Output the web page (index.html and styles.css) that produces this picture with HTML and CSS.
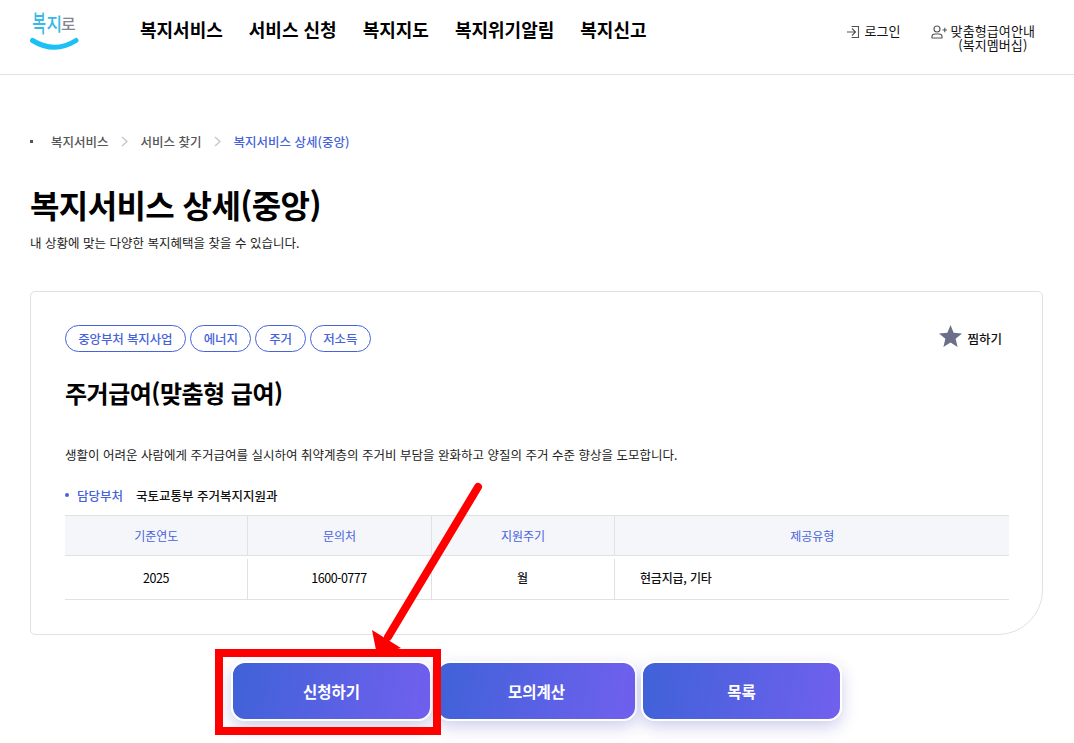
FILE: index.html
```html
<!DOCTYPE html>
<html lang="ko">
<head>
<meta charset="utf-8">
<title>복지서비스 상세(중앙)</title>
<link rel="stylesheet" href="styles.css">
</head>
<body>
<header class="header">
  <a class="logo"><span class="logo-text"><span class="logo-a">복</span><span class="logo-b">지</span><span class="logo-c">로</span></span>
    <svg class="logo-smile" width="50" height="14" viewBox="0 0 50 14"><path d="M2.500 3.500Q24.500 17 46 3.500" fill="none" stroke="#1cc0f5" stroke-width="5" stroke-linecap="round"/></svg>
  </a>
  <nav class="gnb">
    <a>복지서비스</a><a>서비스 신청</a><a>복지지도</a><a>복지위기알림</a><a>복지신고</a>
  </nav>
  <div class="util">
    <a class="util-item">
      <svg width="14" height="14" viewBox="0 0 14 14"><path d="M1 7H9M6 3.500L9.500 7L6 10.500M5.500 1.500H12.500V12.500H5.500" fill="none" stroke="#555" stroke-width="1.100"/></svg>
      <span>로그인</span>
    </a>
    <a class="util-item member">
      <svg width="16" height="14" viewBox="0 0 16 14"><circle cx="6" cy="4" r="3" fill="none" stroke="#555" stroke-width="1.100"/><path d="M1 13V11.500Q1 9 4 9H8Q11 9 11 11.500V13ZM11.500 5H16M13.750 2.750V7.250" fill="none" stroke="#555" stroke-width="1.100"/></svg>
      <span>맞춤형급여안내<br>(복지멤버십)</span>
    </a>
  </div>
</header>
<main class="main">
  <ol class="crumbs">
    <li class="crumb-dot"></li>
    <li>복지서비스</li>
    <li class="sep"><svg width="7" height="11" viewBox="0 0 7 11"><path d="M1 1L6 5.500L1 10" fill="none" stroke="#c8c8c8" stroke-width="1.500"/></svg></li>
    <li>서비스 찾기</li>
    <li class="sep"><svg width="7" height="11" viewBox="0 0 7 11"><path d="M1 1L6 5.500L1 10" fill="none" stroke="#c8c8c8" stroke-width="1.500"/></svg></li>
    <li class="crumb-now">복지서비스 상세(중앙)</li>
  </ol>
  <h1 class="title">복지서비스 상세(중앙)</h1>
  <p class="subtitle">내 상황에 맞는 다양한 복지혜택을 찾을 수 있습니다.</p>
  <section class="card">
    <div class="card-top">
      <ul class="tags">
        <li>중앙부처 복지사업</li><li>에너지</li><li>주거</li><li>저소득</li>
      </ul>
      <button class="fav">
        <svg width="23" height="22" viewBox="0 0 22 21"><path d="M11 0L14 7.500L22 8.100L15.900 13.200L17.800 21L11 16.800L4.200 21L6.100 13.200L0 8.100L8 7.500Z" fill="#6b6f8a"/></svg>
        <span>찜하기</span>
      </button>
    </div>
    <h2 class="card-title">주거급여(맞춤형 급여)</h2>
    <p class="desc">생활이 어려운 사람에게 주거급여를 실시하여 취약계층의 주거비 부담을 완화하고 양질의 주거 수준 향상을 도모합니다.</p>
    <div class="dept"><span class="dept-label">담당부처</span><span class="dept-value">국토교통부 주거복지지원과</span></div>
    <table class="info">
      <thead><tr><th>기준연도</th><th>문의처</th><th>지원주기</th><th>제공유형</th></tr></thead>
      <tbody><tr><td class="num">2025</td><td class="num">1600-0777</td><td>월</td><td class="left">현금지급, 기타</td></tr></tbody>
    </table>
  </section>
  <div class="actions">
    <a class="btn">신청하기</a><a class="btn">모의계산</a><a class="btn">목록</a>
  </div>
</main>
<svg class="annotation" width="1074" height="743" viewBox="0 0 1074 743">
  <path d="M478 487L388 637" fill="none" stroke="#ff0000" stroke-width="8" stroke-linecap="round"/>
  <path d="M372 630L377 655L401 648Z" fill="#ff0000"/>
  <rect x="219" y="653" width="218" height="78" fill="none" stroke="#ff0000" stroke-width="8"/>
</svg>
</body>
</html>
```
FILE: styles.css
```css
* { box-sizing: border-box; }
html, body { margin: 0; padding: 0; height: 743px; overflow: hidden; }
body { position: relative; background: #fff; color: #111; font-family: "Noto Sans CJK KR", "Noto Sans", sans-serif; }
ul, ol { list-style: none; margin: 0; padding: 0; }
.header { display: flex; align-items: flex-start; height: 75px; padding: 0 39px 0 30px; border-bottom: 1px solid #e1e1e1; }
.logo { display: flex; flex-direction: column; width: 50px; margin-top: 5px; }
.logo-text { display: flex; align-items: flex-end; height: 32px; padding-left: 2px; font-weight: 500; white-space: nowrap; }
.logo-a { font-size: 20px; line-height: 30px; color: #35b9ea; transform: scale(0.750, 1.200); margin: 0 -2px 0 -2px; }
.logo-b { font-size: 17px; line-height: 28px; color: #35b9ea; transform: scaleY(1.100); margin-right: -1px; }
.logo-c { font-size: 16px; line-height: 27px; color: #85858d; }
.logo-smile { margin-top: 0; }
.gnb { display: flex; gap: 26px; margin: 17px 0 0 60px; font-size: 18px; line-height: 25px; font-weight: 700; color: #000; white-space: nowrap; }
.util { display: flex; gap: 30px; margin: 24px 0 0 auto; font-size: 13px; line-height: 14px; color: #111; letter-spacing: 0.100px; }
.util-item { display: flex; gap: 4px; align-items: flex-start; white-space: nowrap; }
.util-item svg { margin-top: 1px; }
.member span { text-align: center; }
.main { padding: 0 31px 0 30px; }
.crumbs { display: flex; align-items: center; margin-top: 56px; height: 20px; font-size: 12.500px; font-weight: 500; color: #555; }
.crumb-dot { width: 3px; height: 3px; margin-right: 18px; background: #555; }
.sep { display: flex; margin: 0 13px 0 12px; }
.crumb-now { color: #4663dc; }
.title { margin: 30px 0 0; font-size: 32px; line-height: 46px; font-weight: 700; color: #000; letter-spacing: -0.600px; }
.subtitle { margin: 6px 0 0; font-size: 12.500px; line-height: 20px; color: #222; }
.card { height: 344px; margin-top: 38px; padding: 33px 33px 0 34px; border: 1px solid #e1e1e1; border-radius: 5px 5px 45px 5px; }
.card-top { display: flex; justify-content: space-between; align-items: flex-start; }
.tags { display: flex; gap: 4px; margin-left: -0.500px; }
.tags li { height: 27px; padding: 0 12.700px; border: 1px solid #4663dc; border-radius: 14px; font-size: 12.500px; line-height: 25px; font-weight: 500; color: #4663dc; letter-spacing: -0.150px; }
.fav { display: flex; align-items: center; gap: 5px; height: 27px; margin: 0 7px 0 0; padding: 0; border: 0; background: none; font: 500 12.500px "Noto Sans CJK KR", sans-serif; color: #111; }
.fav svg { margin-top: -5px; }
.card-title { margin: 23px 0 0; font-size: 24px; line-height: 35px; font-weight: 700; color: #000; letter-spacing: -0.500px; }
.desc { margin: 35px 0 0; font-size: 12.500px; line-height: 20px; color: #222; white-space: nowrap; }
.dept { display: flex; align-items: center; margin-top: 20px; height: 20px; font-size: 12.500px; font-weight: 500; }
.dept-label { position: relative; width: 71px; padding-left: 12px; color: #4663dc; }
.dept-label::before { content: ""; position: absolute; left: 0; top: 7px; width: 4px; height: 4px; border-radius: 50%; background: #4663dc; }
.dept-value { color: #111; }
.info { width: 944px; margin-top: 10px; border-collapse: collapse; table-layout: fixed; font-size: 12px; }
.info th { height: 40px; padding: 0 0 0 1px; border-top: 1px solid #e1e1e1; border-bottom: 1px solid #e1e1e1; border-left: 1px solid #e1e1e1; background: #f5f6fa; color: #4663dc; font-weight: 400; }
.info th:first-child { border-left: 0; width: 182px; }
.info th:nth-child(2) { width: 184px; }
.info th:nth-child(3) { width: 183px; }
.info td { height: 44px; padding: 0; border-bottom: 1px solid #e1e1e1; background: linear-gradient(#e1e1e1, #e1e1e1) no-repeat left bottom / 1px calc(100% - 3px); text-align: center; color: #111; font-weight: 500; letter-spacing: -0.200px; }
.info td:first-child { background: none; }
.info td.num { font-size: 12.500px; font-weight: 400; color: #000; letter-spacing: -0.500px; }
.info td.left { padding-left: 26px; text-align: left; }
.actions { display: flex; justify-content: center; gap: 4px; margin-top: 26px; }
.btn { display: flex; align-items: center; justify-content: center; width: 201px; height: 60px; border: 2px solid #fff; border-radius: 14px; background: linear-gradient(100deg, #3f62d8, #7160ee); box-shadow: 0 6px 16px rgba(80, 80, 190, 0.280); color: #fff; font-size: 15.500px; font-weight: 700; }
.annotation { position: absolute; left: 0; top: 0; pointer-events: none; }
```
